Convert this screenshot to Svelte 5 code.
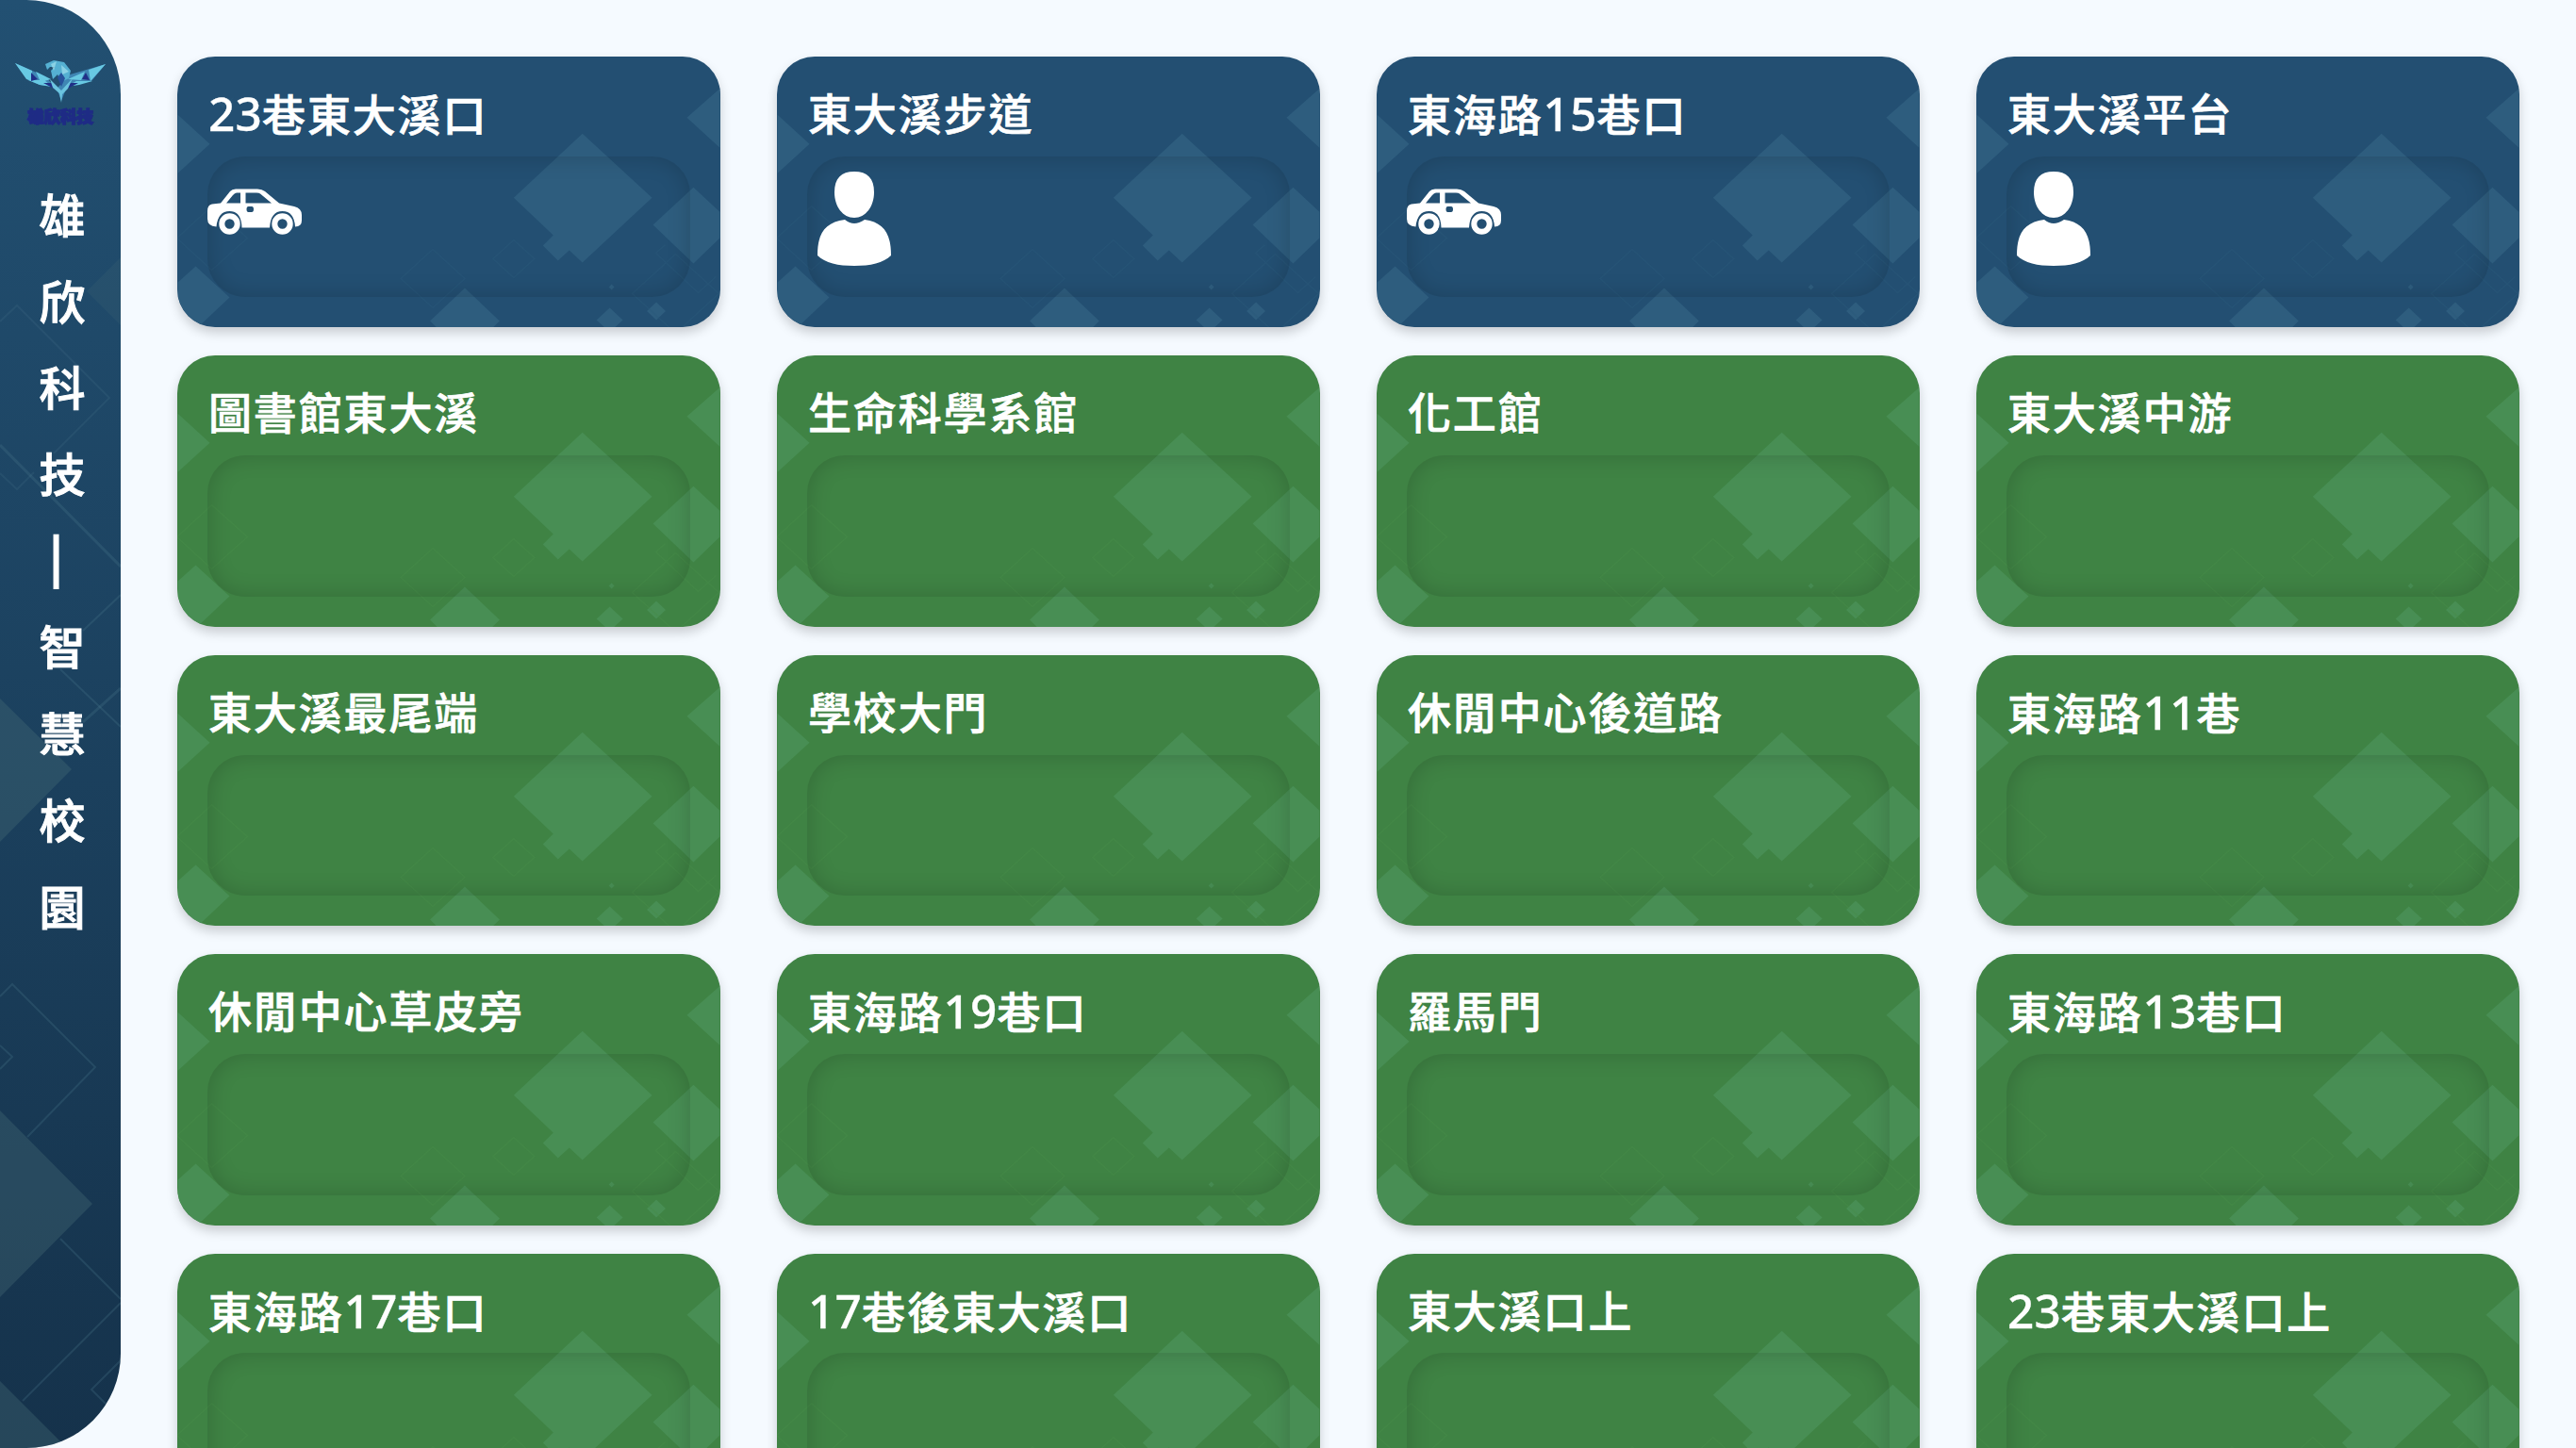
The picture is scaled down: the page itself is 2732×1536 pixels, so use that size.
<script>
  const places = [
    { name: '23巷東大溪口', seen: 'car' },
    { name: '東大溪步道', seen: 'person' },
    { name: '東海路15巷口', seen: 'car' },
    { name: '東大溪平台', seen: 'person' },
    ...[
      '圖書館東大溪', '生命科學系館', '化工館', '東大溪中游',
      '東大溪最尾端', '學校大門', '休閒中心後道路', '東海路11巷',
      '休閒中心草皮旁', '東海路19巷口', '羅馬門', '東海路13巷口',
      '東海路17巷口', '17巷後東大溪口', '東大溪口上', '23巷東大溪口上',
    ].map((name) => ({ name, seen: null })),
  ];
  const brand = [...'雄欣科技|智慧校園'];
  // Split a name so that digits can be sized apart from the characters
  const parts = (name) => name.split(/(\d+)/).filter(Boolean);
</script>

<div class="page">
  <aside class="side">
    <svg class="pattern" viewBox="0 0 128 1536" aria-hidden="true">
      <g fill="#4a7078" fill-opacity=".34">
        <path d="M0 741L76 816L0 893ZM0 1178L98 1277L0 1376ZM0 1465L71 1536H0Z" />
        <path d="M128 273L92 309L128 345Z" fill-opacity=".18" />
      </g>
      <g fill="none" stroke="#4d7c90" stroke-opacity=".26" stroke-width="2">
        <path d="M0 341L18 324L116 422L57 481M0 502L18 519L36 501" stroke-opacity=".18" />
        <path d="M0 472L128 601M128 730L88 766" stroke-width="3" />
        <path d="M128 631L88 669M64 710L128 771" />
        <path d="M0 1057L13 1044L101 1132L29 1206M0 1109L13 1121L0 1134M64 1314L128 1378M128 1382L24 1486M128 1443L97 1474L112 1489" />
      </g>
    </svg>
    <svg class="logo" viewBox="0 0 110 100" role="img" aria-label="雄欣科技">
      <path d="M6 17L38 31L46 40L50 44L55 39L61 30L102 18L87 36L70 40L61 42L55 57L50 43L32 40L20 35Z" fill="#3f86b4" />
      <path d="M6 17L24 25L24 36L18 34ZM28 26L44 34L33 37ZM20 35L37 35L46 42L32 40ZM102 18L84 24L86 36ZM80 26L62 34L76 35ZM88 36L71 36L60 42L74 40Z" fill="#68c9e3" />
      <path d="M23 27L30 34L23 36ZM81 27L85 35L77 34ZM36 38L46 38L49 45ZM73 38L63 38L60 45Z" fill="#202f87" />
      <path d="M38 18L47 14L58 16L65 25L63 33L55 37L51 29L46 34L44 25L48 21L43 21L40 24Z" fill="#55b0d2" />
      <path d="M43 34L55 46L67 33L62 44L56 50L55 59L53 49L46 43Z" fill="#6bc4df" />
      <path d="M44 18L50 15L47 25ZM55 19L63 26L56 29Z" fill="#a1e0ed" opacity=".7" />
      <path d="M51 32L55 27L59 33L55 42Z" fill="#27529b" />
      <text x="19" y="80" textLength="70" lengthAdjust="spacingAndGlyphs">雄欣科技</text>
    </svg>
    <div class="brand">
      {#each brand as ch}<span class:bar={ch === '|'}>{ch}</span>{/each}
    </div>
  </aside>

  <main class="grid">
    {#each places as place}
      <section class="card" class:active={place.seen}>
        <svg class="pattern" viewBox="0 0 576 288" aria-hidden="true">
          <path class="solid" d="M430 82L504 150L430 219L416 206L404 217L388 201L399 190L357 150ZM548 139L576 165V193L548 220L505 179ZM576 34V97L541 65ZM0 62L34 93L0 124ZM19 223L55 256L19 290L0 273V240ZM305 246L342 281L330 293H280L268 281ZM459 267L473 280L459 293L445 280ZM508.500 261L518.500 270.500L508.500 280L498.500 270.500ZM461 242L464 245L461 248L458 245Z" />
          <path class="spot" d="M36 43L48 55L60 43L48 50Z" />
          <path class="line" d="M357 195L379 215L357 235L335 215ZM271 205L305 236L271 267L237 236ZM36 159L74 193L36 227L-1 193ZM529 210L575 252L529 294L483 252ZM518 200L508 209L553 251L572 234" />
        </svg>
        <h2>{#each parts(place.name) as part}<span class:num={/\d/.test(part)}>{part}</span>{/each}</h2>
        <div class="well">
          {#if place.seen === 'car'}
            <svg class="car" viewBox="0 0 100 50" aria-label="car">
              <path fill="#fff" fill-rule="evenodd" d="M5 16.500L14 15.500L24 3Q26 .5 30 .5H53Q58 .5 61 3L76 15.500L92 19Q100 21 100 28V34Q100 40 93 40.500Q92 24 79.500 24Q67 24 66 41.500H36.500Q36 24 23.500 24Q11 24 9.500 40.500Q0 40 0 32V24Q0 17 5 16.500ZM20 15.500H35V4.500H31Q29 4.500 27 7ZM40.500 4.500V15.500H68L56 5.500Q55 4.500 52 4.500ZM43.500 19Q41.500 19 41.500 22Q41.500 25 43.500 25H47Q49 25 49 22Q49 19 47 19Z" />
              <g fill="none" stroke="#fff" stroke-width="6"><circle cx="23.500" cy="37.500" r="8.200" /><circle cx="79.500" cy="37.500" r="8.200" /></g>
            </svg>
          {:else if place.seen === 'person'}
            <svg class="person" viewBox="0 0 78 100" aria-label="person">
              <path fill="#fff" d="M39 0C53 0 60 7 60 22C60 37 51 49 39 49C27 49 18 37 18 22C18 7 25 0 39 0ZM29 51Q34 55 39 55Q44 55 50 51C70 54 78 65 78 89C70 97 56 100 39 100C22 100 8 97 0 89C0 65 8 54 29 51Z" />
            </svg>
          {/if}
        </div>
      </section>
    {/each}
  </main>
</div>

<style>
  :global(body) { background: #f5faff; overflow: hidden; }
  .page {
    display: flex;
    width: 2732px;
    height: 1536px;
    overflow: hidden;
    background: #f5faff;
    font-family: 'Noto Sans', 'Noto Sans CJK TC', sans-serif;
    color: #fff;
  }
  .side {
    position: relative;
    flex: none;
    box-sizing: border-box;
    width: 128px;
    height: 1536px;
    padding: 50px 0 0 10px;
    border-radius: 0 100px 100px 0;
    overflow: hidden;
    background: linear-gradient(#225072, #15324b);
  }
  .pattern { position: absolute; inset: 0; width: 100%; height: 100%; }
  .logo { position: relative; display: block; width: 110px; height: 100px; }
  .logo text { font: 900 17px 'Noto Sans CJK TC', sans-serif; fill: #1e2b85; stroke: #1e2b85; stroke-width: 1.300; }
  .brand {
    position: relative;
    display: flex;
    flex-direction: column;
    padding: 30px 0 0 31.500px;
    font: 500 49px/91.700px 'Noto Sans CJK TC', sans-serif;
    -webkit-text-stroke: 1px #fff;
  }
  .brand span { height: 91.700px; }
  .brand .bar {
    box-sizing: border-box;
    padding-left: 11px;
    font-size: 50px;
    line-height: 82px;
    -webkit-text-stroke-width: 2px;
  }
  .grid {
    flex: 1;
    display: grid;
    grid-template-columns: repeat(4, 1fr);
    grid-auto-rows: 287.400px;
    gap: 30px 60px;
    padding: 60px;
  }
  .card {
    position: relative;
    display: flex;
    flex-direction: column;
    box-sizing: border-box;
    padding: 32px;
    border-radius: 40px;
    background: #3f8344;
    box-shadow: 0 6px 12px rgba(0, 0, 0, .18);
    --solid: #488e54;
    --line: #468b4a;
  }
  .card.active { background: #234f72; --solid: #2e5d7e; --line: #2b5879; }
  .card .pattern { border-radius: 40px; }
  .solid { fill: var(--solid); }
  .spot { fill: var(--solid); opacity: .4; }
  .line { fill: none; stroke: var(--line); stroke-width: 1.500; opacity: .45; }
  h2 {
    position: relative;
    box-sizing: border-box;
    margin: 0;
    padding-left: 1px;
    height: 74px;
    font-size: 46px;
    font-weight: 500;
    line-height: 56px;
    letter-spacing: 1.850px;
    white-space: nowrap;
    -webkit-text-stroke: .7px #fff;
  }
  .num { font-size: 49.500px; letter-spacing: .2px; -webkit-text-stroke-width: .3px; }
  .well {
    position: relative;
    height: 150px;
    border-radius: 40px;
    box-shadow: inset 0 0 24px rgba(0, 0, 0, .18);
  }
  .well svg { display: block; }
  .car { width: 100px; height: 50px; margin-top: 34.500px; }
  .person { width: 78px; height: 100px; margin: 16px 0 0 11px; }
</style>
